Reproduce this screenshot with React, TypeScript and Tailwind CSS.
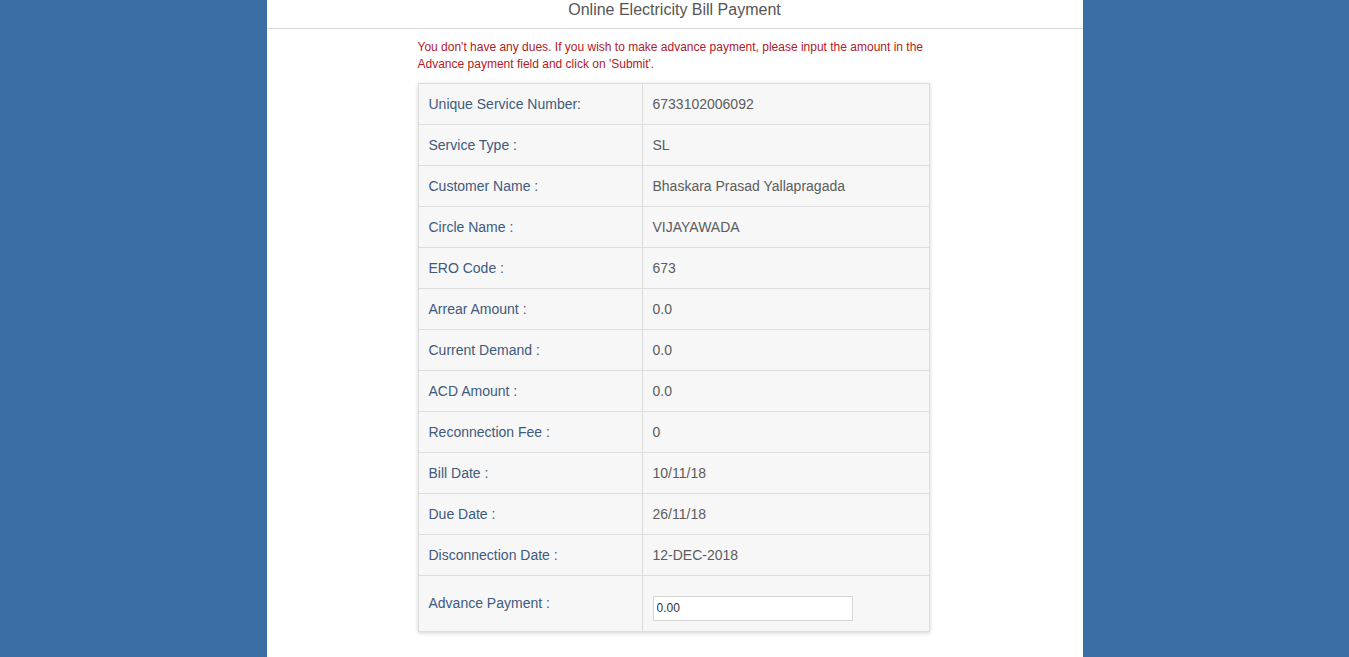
import React from 'react';

const rows: [string, string][] = [
  ['Unique Service Number:', '6733102006092'],
  ['Service Type :', 'SL'],
  ['Customer Name :', 'Bhaskara Prasad Yallapragada'],
  ['Circle Name :', 'VIJAYAWADA'],
  ['ERO Code :', '673'],
  ['Arrear Amount :', '0.0'],
  ['Current Demand :', '0.0'],
  ['ACD Amount :', '0.0'],
  ['Reconnection Fee :', '0'],
  ['Bill Date :', '10/11/18'],
  ['Due Date :', '26/11/18'],
  ['Disconnection Date :', '12-DEC-2018'],
];

export default function App() {
  return (
    <div
      className="min-h-[657px] h-[657px] overflow-hidden bg-[#3b6ea5] flex justify-center"
      style={{ fontFamily: '"Liberation Sans", Arial, sans-serif' }}
    >
      <div className="w-[816px] bg-white">
        {/* Header */}
        <div className="h-[29px] pt-[1px] border-b border-[#dcdcdc] text-center text-[16px] leading-[18px] text-[#555]">
          Online Electricity Bill Payment
        </div>

        <div className="w-[512px] ml-[151px] pt-[10px]">
          {/* Notice */}
          <p className="text-[12px] leading-[17px] text-[#b0201f]">
            You don't have any dues. If you wish to make advance payment, please input the amount in the
            Advance payment field and click on 'Submit'.
          </p>

          {/* Details table */}
          <div className="mt-[10px] bg-[#f7f7f7] border border-[#dddddd] shadow-[0_1px_4px_rgba(0,0,0,0.18)]">
            {rows.map(([label, value]) => (
              <div key={label} className="flex h-[41px] border-b border-[#dddddd]">
                <div className="w-[224px] border-r border-[#dddddd] pl-[10px] flex items-center text-[14px] text-[#3e5a7d]">
                  {label}
                </div>
                <div className="flex-1 pl-[10px] flex items-center text-[14px] text-[#5c5c5c]">{value}</div>
              </div>
            ))}
            <div className="flex h-[55px]">
              <div className="w-[224px] border-r border-[#dddddd] pl-[10px] pt-[17px] text-[14px] text-[#3e5a7d]">
                Advance Payment :
              </div>
              <div className="flex-1 pl-[10px] pt-[19px]">
                <input
                  type="text"
                  defaultValue="0.00"
                  className="w-[200px] h-[25px] border border-[#d6d6d6] bg-white px-[3px] text-[12px] text-[#333] outline-none"
                  style={{ fontFamily: '"Liberation Sans", Arial, sans-serif' }}
                />
              </div>
            </div>
          </div>
        </div>
      </div>
    </div>
  );
}
